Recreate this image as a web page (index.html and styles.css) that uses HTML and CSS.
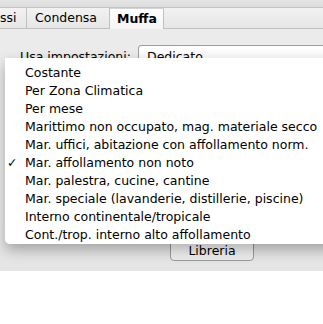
FILE: index.html
```html
<!DOCTYPE html>
<html lang="it">
<head>
  <meta charset="UTF-8" />
  <title>Muffa</title>
  <link rel="stylesheet" href="styles.css">
</head>
<body>
  <div class="window">
    <div class="top-strip"></div>
    <div class="tabs">
      <div class="tab tab-cut">ssi</div>
      <div class="tab">Condensa</div>
      <div class="tab selected">Muffa</div>
      <div class="tab-rest"></div>
    </div>
    <div class="panel">
      <div class="settings-row">
        <span class="label">Usa impostazioni:</span>
        <div class="select">Dedicato</div>
      </div>
      <div class="spacer"></div>
      <div class="button-row">
        <button class="btn">Libreria</button>
      </div>
    </div>

    <ul class="menu">
      <li>Costante</li>
      <li>Per Zona Climatica</li>
      <li>Per mese</li>
      <li>Marittimo non occupato, mag. materiale secco</li>
      <li>Mar. uffici, abitazione con affollamento norm.</li>
      <li class="checked">Mar. affollamento non noto</li>
      <li>Mar. palestra, cucine, cantine</li>
      <li>Mar. speciale (lavanderie, distillerie, piscine)</li>
      <li>Interno continentale/tropicale</li>
      <li>Cont./trop. interno alto affollamento</li>
    </ul>
  </div>
</body>
</html>
```

FILE: styles.css
```css
* {
  box-sizing: border-box;
  margin: 0;
  padding: 0;
}

body {
  width: 323px;
  height: 324px;
  overflow: hidden;
  background: #ffffff;
  font-family: 'DejaVu Sans', sans-serif;
  font-size: 12.5px;
  color: #000;
}

.window {
  position: relative;
  width: 323px;
  height: 324px;
  overflow: hidden;
  display: flex;
  flex-direction: column;
}

.top-strip {
  height: 8px;
  background: linear-gradient(#e4e4e4, #dcdcdc);
  border-bottom: 1px solid #c4c4c4;
}

.tabs {
  display: flex;
  height: 21px;
  background: linear-gradient(#f2f2f2, #e6e6e6);
  border-bottom: 1px solid #c0c0c0;
}

.tab {
  padding: 2px 12px 0 8px;
  border-right: 1px solid #c0c0c0;
  white-space: nowrap;
}

.tab-cut {
  padding-left: 0;
  width: 27px;
}

.tab.selected {
  font-weight: bold;
  background: linear-gradient(#ffffff, #f4f4f4);
  padding: 2px 6px 0 7px;
  margin-bottom: -1px;
  border-top: 1px solid #d4d4d4;
}

.tab-rest {
  flex: 1;
}

.panel {
  height: 242px;
  background: linear-gradient(#ebebeb 80%, #e4e4e4);
  display: flex;
  flex-direction: column;
  padding-top: 16px;
}

.settings-row {
  display: flex;
  align-items: flex-start;
  padding-left: 20px;
}

.label {
  width: 118px;
  padding-top: 4px;
}

.select {
  flex: 1;
  height: 24px;
  margin-right: -20px;
  background: linear-gradient(#ffffff, #f6f6f6);
  border: 1px solid #9e9e9e;
  border-radius: 3px 0 0 3px;
  padding: 3px 0 0 8px;
}

.spacer {
  flex: 1;
}

.button-row {
  display: flex;
  padding-left: 170px;
  padding-bottom: 10px;
}

.btn {
  width: 84px;
  height: 22px;
  font-family: inherit;
  font-size: inherit;
  background: linear-gradient(#ffffff, #ececec);
  border: 1px solid #9a9a9a;
  border-radius: 4px;
}

.menu {
  position: absolute;
  left: 5px;
  top: 58px;
  width: 340px;
  height: 186px;
  list-style: none;
  background: rgba(255, 255, 255, 0.98);
  border-radius: 0 0 0 5px;
  box-shadow: 0 6px 14px rgba(0, 0, 0, 0.3);
  padding-top: 6px;
}

.menu li {
  height: 18px;
  line-height: 18px;
  padding-left: 20px;
  white-space: nowrap;
  position: relative;
}

.menu li.checked::before {
  content: "\2713";
  position: absolute;
  left: 2px;
}
```
